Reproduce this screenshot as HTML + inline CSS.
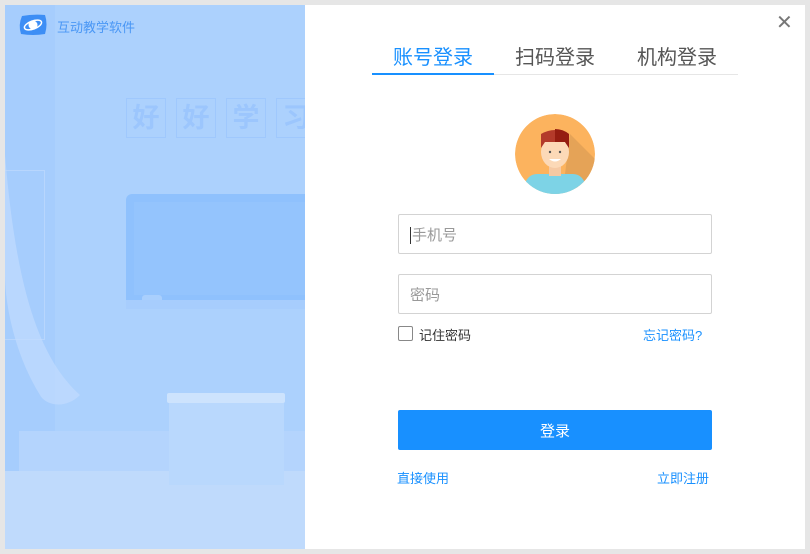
<!DOCTYPE html>
<html><head><meta charset="utf-8"><style>
*{margin:0;padding:0;box-sizing:border-box}
body{width:810px;height:554px;background:#e6e6e6;font-family:"Liberation Sans","Noto Sans CJK SC",sans-serif;position:relative;overflow:hidden}
.win{position:absolute;left:5px;top:5px;width:800px;height:544px;background:#fff;overflow:hidden}
.left{position:absolute;left:0;top:0;width:300px;height:544px;background:#acd1fd;overflow:hidden}
.abs{position:absolute}
.tab{position:absolute;top:36px;font-size:20px;color:#555}
.inp{position:absolute;left:393px;width:314px;height:40px;border:1px solid #d3d3d3;border-radius:2px;font-size:15px;color:#999;padding-left:11px;line-height:42px}
</style></head><body>
<div class="win">
 <div class="left">
  <div class="abs" style="left:0;top:0;width:50px;height:544px;background:#a6cdfd"></div>
  <div class="abs" style="left:0;top:466px;width:300px;height:84px;background:#bfdafc"></div>
  <div class="abs" style="left:14px;top:426px;width:286px;height:40px;background:#b4d4fd"></div>
  <div class="abs" style="left:121px;top:189px;width:179px;height:106px;background:#8fc1fd;border-radius:6px 0 0 0"></div>
  <div class="abs" style="left:129px;top:197px;width:171px;height:93px;background:#94c4fd"></div>
  <div class="abs" style="left:137px;top:290px;width:20px;height:8px;background:#a9cffd;border-radius:3px"></div>
  <div class="abs" style="left:121px;top:295px;width:179px;height:9px;background:#a7cdfd"></div>
  <div class="abs" style="left:162px;top:388px;width:118px;height:10px;background:#cde3fd;border-radius:2px"></div>
  <div class="abs" style="left:164px;top:398px;width:115px;height:82px;background:#b9d8fd"></div>
  <div class="abs" style="left:0;top:165px;width:40px;height:170px;border:1px solid #b8d6fd;border-left:none"></div>
  <svg class="abs" style="left:0;top:150px" width="90" height="260"><path d="M0 0 C10 120 30 200 75 240 C60 255 40 250 35 240 C10 200 0 150 0 120Z" fill="#c2dcfd" opacity=".7"/></svg>
  <div class="abs" style="left:121px;top:93px;width:40px;height:40px;border:1px solid #9fc8fd;color:#9cc6fd;font-size:27px;text-align:center;line-height:38px;font-weight:bold">好</div>
  <div class="abs" style="left:171px;top:93px;width:40px;height:40px;border:1px solid #9fc8fd;color:#9cc6fd;font-size:27px;text-align:center;line-height:38px;font-weight:bold">好</div>
  <div class="abs" style="left:221px;top:93px;width:40px;height:40px;border:1px solid #9fc8fd;color:#9cc6fd;font-size:27px;text-align:center;line-height:38px;font-weight:bold">学</div>
  <div class="abs" style="left:271px;top:93px;width:40px;height:40px;border:1px solid #9fc8fd;color:#9cc6fd;font-size:27px;text-align:center;line-height:38px;font-weight:bold;overflow:hidden">习</div>
  <svg class="abs" style="left:13px;top:9px" width="30" height="22"><path d="M4 2 Q15 0 27 1 Q30 10 27 20 Q15 22 3 20 Q0 11 4 2Z" fill="#3d8ef5"/><ellipse cx="15" cy="11" rx="9" ry="4" fill="none" stroke="#fff" stroke-width="1.5" transform="rotate(-20 15 11)"/><circle cx="15" cy="11" r="4.5" fill="#fff"/></svg>
  <div class="abs" style="left:52px;top:12px;font-size:13px;color:#4a97f5">互动教学软件</div>
 </div>
 <div class="tab" style="left:388px;color:#1890ff">账号登录</div>
 <div class="tab" style="left:510px">扫码登录</div>
 <div class="tab" style="left:632px">机构登录</div>
 <div class="abs" style="left:367px;top:69px;width:366px;height:1px;background:#e6e6e6"></div>
 <div class="abs" style="left:367px;top:68px;width:122px;height:2px;background:#1890ff"></div>
 <div class="abs" style="left:771px;top:5px;font-size:20px;color:#777">✕</div>
 <svg class="abs" style="left:510px;top:109px" width="80" height="80"><defs><clipPath id="c"><circle cx="40" cy="40" r="40"/></clipPath></defs><g clip-path="url(#c)"><circle cx="40" cy="40" r="40" fill="#fcb35e"/><path d="M55 20 L90 55 L70 90 L50 60Z" fill="#e5a357"/><rect x="10" y="60" width="60" height="25" rx="12" fill="#7dd3e6"/><rect x="34" y="50" width="12" height="12" fill="#f6c9a3"/><ellipse cx="40" cy="38" rx="14" ry="16" fill="#fcd9b7"/><path d="M26 34 L26 20 Q40 12 54 20 L54 34 L50 28 L30 28Z" fill="#b33a2a"/><path d="M40 15 Q48 15 54 20 L54 34 L50 28 L40 28Z" fill="#951d11"/><path d="M34 45 Q40 50 46 45Z" fill="#fff"/><circle cx="35" cy="38" r="1.2" fill="#555"/><circle cx="45" cy="38" r="1.2" fill="#555"/></g></svg>
 <div class="inp" style="top:209px"><span style="border-left:1px solid #333;padding-left:1px">手机号</span></div>
 <div class="inp" style="top:269px">密码</div>
 <div class="abs" style="left:393px;top:321px;width:15px;height:15px;border:1px solid #888;border-radius:2px"></div>
 <div class="abs" style="left:414px;top:320px;font-size:13px;color:#333">记住密码</div>
 <div class="abs" style="left:638px;top:320px;font-size:13px;color:#1890ff">忘记密码?</div>
 <div class="abs" style="left:393px;top:405px;width:314px;height:40px;background:#1890ff;border-radius:2px;color:#fff;font-size:15px;text-align:center;line-height:43px">登录</div>
 <div class="abs" style="left:392px;top:463px;font-size:13px;color:#1890ff">直接使用</div>
 <div class="abs" style="left:652px;top:463px;font-size:13px;color:#1890ff">立即注册</div>
</div>
</body></html>
